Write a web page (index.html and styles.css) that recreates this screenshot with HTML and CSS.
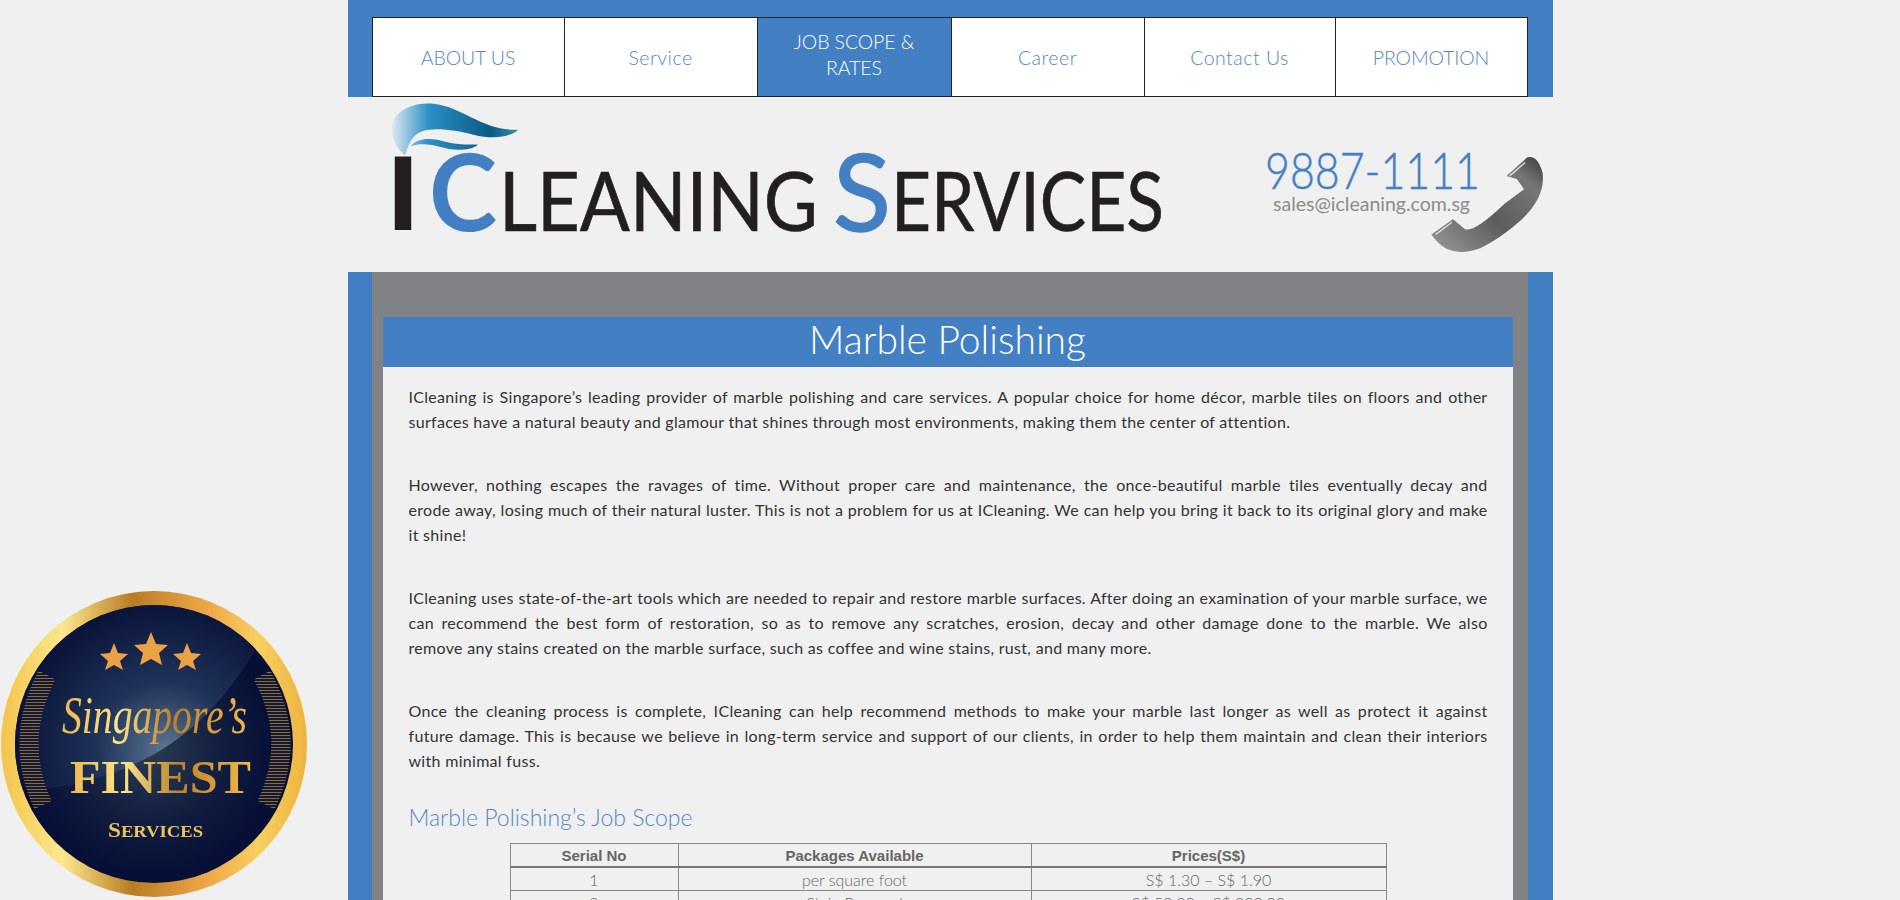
FILE: index.html
```html
<!DOCTYPE html>
<html lang="en">
<head>
    <meta charset="UTF-8">
    <title>Marble Polishing - ICleaning Services</title>
    <link rel="stylesheet" href="styles.css">
</head>
<body>
    <div class="page">
        <nav class="nav-bar">
            <ul class="nav-list">
                <li class="caps"><a href="#">ABOUT US</a></li>
                <li><a href="#">Service</a></li>
                <li class="caps active"><a href="#">JOB SCOPE &amp; RATES</a></li>
                <li><a href="#">Career</a></li>
                <li><a href="#">Contact Us</a></li>
                <li class="caps"><a href="#">PROMOTION</a></li>
            </ul>
        </nav>

        <header class="site-header">
            <svg class="logo" viewBox="348 97 830 175" width="830" height="175">
                <defs>
                    <linearGradient id="swoosh" gradientUnits="userSpaceOnUse" x1="30" y1="0" x2="415" y2="0">
                        <stop offset="0" stop-color="#e6edf5"/>
                        <stop offset="0.3" stop-color="#2b90c5"/>
                        <stop offset="0.78" stop-color="#0c5a85"/>
                        <stop offset="1" stop-color="#3a8fa8"/>
                    </linearGradient>
                </defs>
                <g transform="translate(380 98) scale(0.3333)">
                    <path fill="url(#swoosh)" d="M75 172C45 150 25 100 42 65C60 30 110 12 165 18C250 28 310 100 415 95C390 118 340 125 280 110C220 95 150 85 115 105C95 118 85 140 75 172Z"/>
                    <path fill="url(#swoosh)" d="M92 145C110 120 150 118 190 130C225 140 260 140 295 140C270 158 225 160 185 148C150 138 120 135 92 145Z"/>
                </g>
                <text class="logo-i" x="386.5" y="230" textLength="33" lengthAdjust="spacingAndGlyphs">I</text>
                <text class="logo-cap" x="429" y="231" textLength="68" lengthAdjust="spacingAndGlyphs">C</text>
                <text class="logo-small" x="499" y="231" textLength="319" lengthAdjust="spacingAndGlyphs">LEANING</text>
                <text class="logo-cap logo-s" x="833" y="231" textLength="58" lengthAdjust="spacingAndGlyphs">S</text>
                <text class="logo-small" x="891" y="231" textLength="273" lengthAdjust="spacingAndGlyphs">ERVICES</text>
            </svg>
            <svg class="contact" viewBox="1260 97 293 175" width="293" height="175">
                <defs>
                    <linearGradient id="handset" x1="0" y1="1" x2="1" y2="0">
                        <stop offset="0" stop-color="#9a9a9a"/>
                        <stop offset="0.45" stop-color="#5c5c5c"/>
                        <stop offset="0.8" stop-color="#777"/>
                        <stop offset="1" stop-color="#3a3a3a"/>
                    </linearGradient>
                </defs>
                <text class="contact-phone" x="1265" y="189" textLength="215" lengthAdjust="spacingAndGlyphs">9887-1111</text>
                <text class="contact-mail" x="1273" y="211" textLength="197" lengthAdjust="spacingAndGlyphs">sales@icleaning.com.sg</text>
                <g transform="translate(1419 145) scale(1.03)">
                    <path fill="url(#handset)" d="M85 30L105 12Q115 9 120 27Q123 50 100 72Q80 90 60 100Q40 107 27 101Q18 96 12 87L33 72L45 82Q55 84 83 57L102 43L95 33Z"/>
                    <path fill="none" stroke="#d8d8d8" stroke-width="1.5" d="M88 30L103 17M16 87L32 75"/>
                </g>
            </svg>
        </header>

        <main class="main-frame">
            <h1 class="page-title">Marble Polishing</h1>
            <section class="content">
                <p>ICleaning is Singapore’s leading provider of marble polishing and care services. A popular choice for home décor, marble tiles on floors and other<br>
                <span class="last-line">surfaces have a natural beauty and glamour that shines through most environments, making them the center of attention.</span></p>
                <p>However, nothing escapes the ravages of time. Without proper care and maintenance, the once-beautiful marble tiles eventually decay and<br>
                erode away, losing much of their natural luster. This is not a problem for us at ICleaning. We can help you bring it back to its original glory and make<br>
                <span class="last-line">it shine!</span></p>
                <p>ICleaning uses state-of-the-art tools which are needed to repair and restore marble surfaces. After doing an examination of your marble surface, we<br>
                can recommend the best form of restoration, so as to remove any scratches, erosion, decay and other damage done to the marble. We also<br>
                <span class="last-line">remove any stains created on the marble surface, such as coffee and wine stains, rust, and many more.</span></p>
                <p>Once the cleaning process is complete, ICleaning can help recommend methods to make your marble last longer as well as protect it against<br>
                future damage. This is because we believe in long-term service and support of our clients, in order to help them maintain and clean their interiors<br>
                <span class="last-line">with minimal fuss.</span></p>

                <h2 class="section-title">Marble Polishing’s Job Scope</h2>
                <table class="rates">
                    <thead>
                        <tr>
                            <th class="col-serial">Serial No</th>
                            <th class="col-package">Packages Available</th>
                            <th>Prices(S$)</th>
                        </tr>
                    </thead>
                    <tbody>
                        <tr>
                            <td>1</td>
                            <td>per square foot</td>
                            <td>S$ 1.30 – S$ 1.90</td>
                        </tr>
                        <tr>
                            <td>2</td>
                            <td>Stain Removal</td>
                            <td>S$ 50.00 – S$ 200.00</td>
                        </tr>
                    </tbody>
                </table>
            </section>
        </main>
    </div>

    <svg class="badge" viewBox="0 590 310 310" width="310" height="310">
        <defs>
            <linearGradient id="ring" x1="0" y1="0" x2="1" y2="0">
                <stop offset="0" stop-color="#f4c34a"/>
                <stop offset="0.2" stop-color="#fde88e"/>
                <stop offset="0.43" stop-color="#b97c22"/>
                <stop offset="0.67" stop-color="#eda647"/>
                <stop offset="0.84" stop-color="#f7cf5f"/>
                <stop offset="1" stop-color="#eeb33f"/>
            </linearGradient>
            <radialGradient id="disc" gradientUnits="userSpaceOnUse" cx="150" cy="750" r="125">
                <stop offset="0" stop-color="#2c3c52"/>
                <stop offset="0.6" stop-color="#101d3f"/>
                <stop offset="1" stop-color="#070f36"/>
            </radialGradient>
            <radialGradient id="sheen" gradientUnits="userSpaceOnUse" cx="165" cy="750" r="150">
                <stop offset="0" stop-color="#5b7591"/>
                <stop offset="0.45" stop-color="#1f3358"/>
                <stop offset="1" stop-color="#0a1339"/>
            </radialGradient>
            <linearGradient id="gold" x1="0" y1="0" x2="1" y2="0">
                <stop offset="0" stop-color="#eeb84f"/>
                <stop offset="0.3" stop-color="#fbe48a"/>
                <stop offset="0.6" stop-color="#bd7f2a"/>
                <stop offset="1" stop-color="#f1b84a"/>
            </linearGradient>
            <pattern id="hatch" patternUnits="userSpaceOnUse" width="3" height="3">
                <rect width="3" height="3" fill="#14193a"/>
                <rect width="3" height="1" fill="#8a6d35"/>
            </pattern>
            <clipPath id="disc-clip"><circle cx="154" cy="744" r="139"/></clipPath>
        </defs>
        <circle cx="154" cy="744" r="153" fill="url(#ring)"/>
        <circle cx="154" cy="744" r="139" fill="url(#disc)"/>
        <path clip-path="url(#disc-clip)" fill="url(#sheen)" d="M263 638C225 700 170 785 8 792L0 600L263 600Z"/>
        <path fill="none" stroke="url(#hatch)" stroke-width="19" d="M47 675Q13 740 43 805"/>
        <path fill="none" stroke="url(#hatch)" stroke-width="19" d="M262 675Q298 740 266 805"/>
        <path class="star" d="M114 643L118 653L128 654L120 661L123 670L114 665L105 670L108 661L100 654L110 653Z"/>
        <path class="star" d="M151 632L156 644L168 645L159 653L162 665L151 659L140 665L143 653L134 645L146 644Z"/>
        <path class="star" d="M187 643L191 653L201 654L193 661L196 670L187 665L178 670L181 661L173 654L183 653Z"/>
        <text class="badge-script" x="62" y="733" textLength="185" lengthAdjust="spacingAndGlyphs">Singapore’s</text>
        <text class="badge-finest" x="70" y="793" textLength="181" lengthAdjust="spacingAndGlyphs">FINEST</text>
        <text class="badge-services" x="108" y="837" textLength="95" lengthAdjust="spacingAndGlyphs">S<tspan class="badge-small">ERVICES</tspan></text>
    </svg>
</body>
</html>
```

FILE: styles.css
```css
html, body {
    margin: 0;
    height: 100%;
    overflow: hidden;
}

body {
    background: #f0f0f0;
    font-family: 'Lato', sans-serif;
    color: #333;
}

.page {
    width: 1205px;
    margin: 0 auto;
}

/* top nav */
.nav-bar {
    background: #4380c3;
    padding: 17px 25px 0 24px;
    height: 80px;
}

.nav-list {
    display: grid;
    grid-template-columns: 192px 193px 194px 193px 191px 191px;
    height: 80px;
    margin: 0;
    padding: 0;
    list-style: none;
    background: #fff;
    border: 1px solid #222;
    box-sizing: border-box;
}

.nav-list li {
    display: flex;
    align-items: center;
    justify-content: center;
    border-right: 1px solid #222;
    padding: 2px 30px 0;
    text-align: center;
}

.nav-list li:last-child {
    border-right: none;
}

.nav-list a {
    color: #5488c3;
    font-size: 19.5px;
    font-weight: 300;
    letter-spacing: 0.5px;
    line-height: 26px;
    text-decoration: none;
}

.nav-list .caps a {
    letter-spacing: -0.1px;
}

.nav-list .active {
    background: #4380c3;
    padding: 0 30px 4px;
}

.nav-list .active a {
    color: #fff;
}

/* logo strip */
.site-header {
    display: flex;
    justify-content: space-between;
    height: 175px;
}

.logo-i {
    font-size: 101px;
    font-weight: 900;
    fill: #231f20;
}

.logo-cap {
    font-size: 107px;
    font-weight: 700;
    fill: #4380c3;
}

.logo-s {
    font-weight: 400;
    stroke: #4380c3;
    stroke-width: 1.5;
}

.logo-small {
    font-size: 81px;
    font-weight: 400;
    fill: #231f20;
    stroke: #231f20;
    stroke-width: 0.6;
}

.contact-phone {
    font-size: 52px;
    font-weight: 300;
    fill: #4380c3;
    stroke: #4380c3;
    stroke-width: 0.5;
}

.contact-mail {
    font-size: 20px;
    fill: #8c8c8c;
}

/* main content */
.main-frame {
    background: #808285;
    border-left: 24px solid #4380c3;
    border-right: 25px solid #4380c3;
    padding: 45px 15px 0 11px;
}

.page-title {
    margin: 0;
    height: 50px;
    background: #4380c3;
    color: #fff;
    font-size: 39px;
    font-weight: 300;
    line-height: 44px;
    text-align: center;
}

.content {
    background: #f0f0f0;
    padding: 17px 25px 40px 26px;
}

.content p {
    margin: 0 0 38px;
    font-size: 16px;
    line-height: 25px;
    letter-spacing: 0.3px;
    text-align: justify;
    text-align-last: justify;
}

.last-line {
    display: block;
    text-align-last: left;
}

.section-title {
    margin: -10px 0 10px;
    color: #5488c3;
    font-size: 23px;
    font-weight: 300;
    line-height: 32px;
}

.rates {
    width: 877px;
    margin: 0 auto;
    border-collapse: collapse;
    color: #666;
    font-size: 16px;
    text-align: center;
}

.rates th, .rates td {
    height: 22px;
    padding: 0;
    border: 1px solid #888;
}

.rates th {
    font-family: 'Liberation Sans', sans-serif;
    font-size: 15px;
    border-bottom: 2px solid #777;
}

.rates td {
    font-weight: 300;
}

.col-serial {
    width: 167px;
}

.col-package {
    width: 352px;
}

/* floating badge */
.badge {
    position: fixed;
    left: 0;
    bottom: 0;
}

.star {
    fill: #eca146;
}

.badge-script {
    font-family: 'Liberation Serif', serif;
    font-size: 52px;
    font-style: italic;
    fill: url(#gold);
}

.badge-finest {
    font-family: 'Liberation Serif', serif;
    font-size: 46px;
    font-weight: 700;
    fill: url(#gold);
}

.badge-services {
    font-family: 'Liberation Serif', serif;
    font-size: 20px;
    font-weight: 700;
    fill: #eec15a;
}

.badge-small {
    font-size: 16px;
}
```
